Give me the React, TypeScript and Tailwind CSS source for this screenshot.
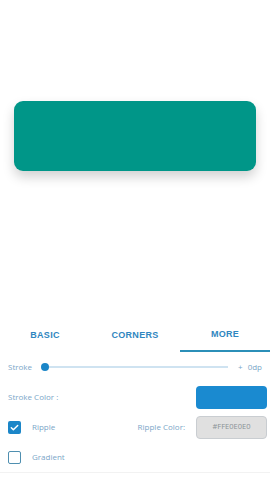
import React from "react";

function Checkbox({ checked }: { checked: boolean }) {
  if (checked) {
    return (
      <div className="flex h-[13px] w-[13px] items-center justify-center rounded-[2px] bg-[#1b86c8]">
        <svg viewBox="0 0 24 24" className="h-[11px] w-[11px]" fill="none" stroke="white" strokeWidth={3.2} strokeLinecap="round" strokeLinejoin="round">
          <path d="M5 12.5l4.5 4.5L19 7.5" />
        </svg>
      </div>
    );
  }
  return <div className="h-[13px] w-[13px] rounded-[2px] border-[1.5px] border-[#4f8fb0]" />;
}

export default function App() {
  const tabs = ["BASIC", "CORNERS", "MORE"];
  const active = 2;

  return (
    <div className="flex h-[480px] w-[270px] flex-col bg-white font-['Open_Sans',sans-serif]">
      <div className="h-[318px] shrink-0 pt-[101px]">
        <div className="mx-[14px] h-[70px] rounded-[9px] bg-[#009688] shadow-[0_6px_12px_rgba(0,0,0,0.18)]" />
      </div>

      <div className="grid h-[34px] grid-cols-3">
        {tabs.map((t, i) => (
          <div
            key={t}
            className={`flex items-center justify-center pt-[1px] text-[9px] font-bold tracking-[0.3px] text-[#2f86c0] font-['Liberation_Sans',sans-serif] ${
              i === active ? "border-b-2 border-[#2b8fb8]" : ""
            }`}
          >
            {t}
          </div>
        ))}
      </div>

      <div className="flex h-[30px] items-center pl-2 pr-2 text-[8px] text-[#7aa6c8]">
        <span className="w-[34px]">Stroke</span>
        <div className="relative flex flex-1 items-center">
          <div className="h-[1.5px] w-full bg-[#cfe3f1]" />
          <div className="absolute left-[0px] h-[8px] w-[8px] -translate-x-[1px] rounded-full bg-[#1b86c8]" />
        </div>
        <span className="ml-[10px] text-[8px] leading-none">+</span>
        <span className="ml-[5px]">0dp</span>
      </div>

      <div className="flex h-[30px] items-center justify-between pl-2 pr-[3px] text-[8px] text-[#7aa6c8]">
        <span>Stroke Color :</span>
        <div className="h-[23px] w-[71px] rounded-[4px] bg-[#1a8ad0]" />
      </div>

      <div className="flex h-[30px] items-center pl-2 pr-[3px] text-[8px] text-[#7aa6c8]">
        <Checkbox checked />
        <span className="ml-[11px]">Ripple</span>
        <span className="ml-auto mr-[11px]">Ripple Color:</span>
        <div className="flex h-[23px] w-[71px] items-center justify-center rounded-[4px] border border-[#c9cdd1] bg-[#e0e0e0] text-[7.5px] text-[#8a9296]">
          #FFE0E0E0
        </div>
      </div>

      <div className="flex h-[30px] items-center pl-2 text-[8px] text-[#7aa6c8]">
        <Checkbox checked={false} />
        <span className="ml-[11px]">Gradient</span>
      </div>

      <div className="flex-1 border-t border-[#f2f2f2]" />
    </div>
  );
}
